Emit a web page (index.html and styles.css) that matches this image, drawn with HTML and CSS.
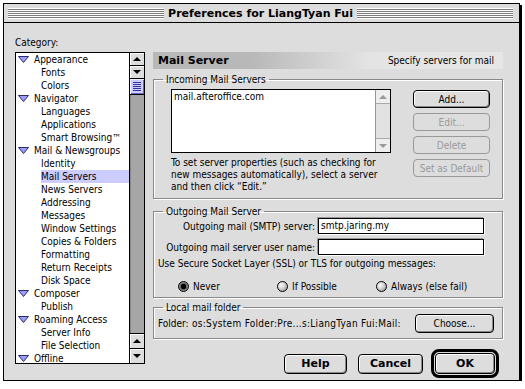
FILE: index.html
```html
<!DOCTYPE html>
<html lang="en">
    <head>
        <meta charset="UTF-8" />
        <meta name="viewport" content="width=device-width, initial-scale=1.0" />
        <title>Preferences for LiangTyan Fui</title>
        <link rel="stylesheet" href="styles.css">
    </head>

    <body>
        <div class="window">
            <div class="titlebar">
                <span class="stripes"></span>
                <span class="title">Preferences for LiangTyan Fui</span>
                <span class="stripes"></span>
            </div>

            <div class="content">
                <div class="sidebar">
                    <div class="cat-label">Category:</div>
                    <div class="tree">
                        <ul class="tree-items">
                            <li class="parent"><svg class="twisty" width="11" height="7" viewBox="0 0 11 7"><polygon points="0.5,0.5 10.5,0.5 5.5,6.5" fill="#9d9dff" stroke="#2a2a66"/></svg>Appearance</li>
                            <li class="child">Fonts</li>
                            <li class="child">Colors</li>
                            <li class="parent"><svg class="twisty" width="11" height="7" viewBox="0 0 11 7"><polygon points="0.5,0.5 10.5,0.5 5.5,6.5" fill="#9d9dff" stroke="#2a2a66"/></svg>Navigator</li>
                            <li class="child">Languages</li>
                            <li class="child">Applications</li>
                            <li class="child">Smart Browsing™</li>
                            <li class="parent"><svg class="twisty" width="11" height="7" viewBox="0 0 11 7"><polygon points="0.5,0.5 10.5,0.5 5.5,6.5" fill="#9d9dff" stroke="#2a2a66"/></svg>Mail &amp; Newsgroups</li>
                            <li class="child">Identity</li>
                            <li class="child selected">Mail Servers</li>
                            <li class="child">News Servers</li>
                            <li class="child">Addressing</li>
                            <li class="child">Messages</li>
                            <li class="child">Window Settings</li>
                            <li class="child">Copies &amp; Folders</li>
                            <li class="child">Formatting</li>
                            <li class="child">Return Receipts</li>
                            <li class="child">Disk Space</li>
                            <li class="parent"><svg class="twisty" width="11" height="7" viewBox="0 0 11 7"><polygon points="0.5,0.5 10.5,0.5 5.5,6.5" fill="#9d9dff" stroke="#2a2a66"/></svg>Composer</li>
                            <li class="child">Publish</li>
                            <li class="parent"><svg class="twisty" width="11" height="7" viewBox="0 0 11 7"><polygon points="0.5,0.5 10.5,0.5 5.5,6.5" fill="#9d9dff" stroke="#2a2a66"/></svg>Roaming Access</li>
                            <li class="child">Server Info</li>
                            <li class="child">File Selection</li>
                            <li class="parent"><svg class="twisty" width="11" height="7" viewBox="0 0 11 7"><polygon points="0.5,0.5 10.5,0.5 5.5,6.5" fill="#9d9dff" stroke="#2a2a66"/></svg>Offline</li>
                        </ul>
                        <div class="vscroll">
                            <div class="sb-btn top"><i class="arrow-up"></i></div>
                            <div class="sb-btn top"><i class="arrow-down"></i></div>
                            <div class="thumb"><span class="grip"></span></div>
                            <div class="track"></div>
                            <div class="sb-btn bottom"><i class="arrow-up"></i></div>
                            <div class="sb-btn bottom"><i class="arrow-down"></i></div>
                        </div>
                    </div>
                </div>

                <div class="panel">
                    <div class="panel-head">
                        <span class="head-title">Mail Server</span>
                        <span class="head-desc">Specify servers for mail</span>
                    </div>

                    <fieldset class="group incoming">
                        <legend>Incoming Mail Servers</legend>
                        <div class="incoming-body">
                            <div class="incoming-left">
                                <div class="server-list">
                                    <div class="server-items">mail.afteroffice.com</div>
                                    <div class="mini-scroll">
                                        <div class="mini-btn"><i class="arrow-up"></i></div>
                                        <div class="mini-track"></div>
                                        <div class="mini-btn lower"><i class="arrow-down"></i></div>
                                    </div>
                                </div>
                                <p class="hint">
                                    To set server properties (such as checking for<br />
                                    new messages automatically), select a server<br />
                                    and then click “Edit.”
                                </p>
                            </div>
                            <div class="btn-col">
                                <button class="btn">Add...</button>
                                <button class="btn" disabled>Edit...</button>
                                <button class="btn" disabled>Delete</button>
                                <button class="btn" disabled>Set as Default</button>
                            </div>
                        </div>
                    </fieldset>

                    <fieldset class="group outgoing">
                        <legend>Outgoing Mail Server</legend>
                        <div class="field-row">
                            <label class="field-label">Outgoing mail (SMTP) server:</label>
                            <div class="text-input">smtp.jaring.my</div>
                        </div>
                        <div class="field-row">
                            <label class="field-label">Outgoing mail server user name:</label>
                            <div class="text-input"></div>
                        </div>
                        <p class="ssl-note">Use Secure Socket Layer (SSL) or TLS for outgoing messages:</p>
                        <div class="radio-row">
                            <span class="radio-opt"><i class="radio on"></i>Never</span>
                            <span class="radio-opt"><i class="radio"></i>If Possible</span>
                            <span class="radio-opt"><i class="radio"></i>Always (else fail)</span>
                        </div>
                    </fieldset>

                    <fieldset class="group local">
                        <legend>Local mail folder</legend>
                        <div class="folder-row">
                            <span class="folder-label">Folder:</span>
                            <span class="folder-path">os:System Folder:Pre...s:LiangTyan Fui:Mail:</span>
                            <button class="btn choose">Choose...</button>
                        </div>
                    </fieldset>

                    <div class="dialog-btns">
                        <button class="btn big help">Help</button>
                        <button class="btn big cancel">Cancel</button>
                        <span class="default-ring"><button class="btn big ok">OK</button></span>
                    </div>
                </div>
            </div>
        </div>
    </body>
</html>
```

FILE: styles.css
```css
* {
    margin: 0;
    padding: 0;
    box-sizing: border-box;
}

body {
    background: #ffffff;
    font-family: "DejaVu Sans Condensed", "DejaVu Sans", sans-serif;
    font-size: 10px;
    color: #000000;
}

.window {
    margin: 3px 0 0 3px;
    width: 517px;
    height: 378px;
    border: 1px solid #000;
    background: #dddddd;
    box-shadow: 2px 2px 0 #000;
    display: flex;
    flex-direction: column;
}

/* title bar */
.titlebar {
    height: 19px;
    border-bottom: 1px solid #000;
    display: flex;
    align-items: center;
    padding: 0 6px 0 4px;
}

.stripes {
    flex: 1;
    height: 11px;
    background: repeating-linear-gradient(to bottom, #ffffff 0, #ffffff 1px, #7a7a7a 1px, #7a7a7a 2px);
}

.title {
    font-family: "DejaVu Sans", sans-serif;
    font-weight: bold;
    font-size: 11px;
    padding: 0 4px;
    white-space: nowrap;
}

.content {
    flex: 1;
    display: flex;
    padding-left: 11px;
}

/* category tree */
.sidebar {
    width: 130px;
}

.cat-label {
    margin-top: 14px;
    height: 12px;
    line-height: 12px;
}

.tree {
    margin-top: 3px;
    height: 312px;
    border: 1px solid #000;
    background: #fff;
    display: flex;
}

.tree-items {
    flex: 1;
    list-style: none;
    overflow: hidden;
}

.tree-items li {
    height: 13px;
    line-height: 13px;
    white-space: nowrap;
}

.parent {
    display: flex;
    align-items: center;
    padding-left: 2px;
}

.twisty {
    margin-right: 5px;
}

.child {
    margin-left: 25px;
}

.selected {
    background: #ccccff;
}

.vscroll {
    width: 15px;
    border-left: 1px solid #000;
    background: #a6a6a6;
    display: flex;
    flex-direction: column;
}

.sb-btn {
    background: #dddddd;
    display: flex;
    align-items: center;
    justify-content: center;
    box-shadow: inset 1px 1px 0 #fff;
}

.sb-btn.top {
    height: 13px;
    border-bottom: 1px solid #000;
}

.sb-btn.bottom {
    height: 15px;
    border-top: 1px solid #000;
}

.arrow-up {
    width: 0;
    height: 0;
    border-left: 4px solid transparent;
    border-right: 4px solid transparent;
    border-bottom: 4px solid #000;
}

.arrow-down {
    width: 0;
    height: 0;
    border-left: 4px solid transparent;
    border-right: 4px solid transparent;
    border-top: 4px solid #000;
}

.thumb {
    height: 16px;
    background: #ccccff;
    border-bottom: 1px solid #000;
    display: flex;
    align-items: center;
    justify-content: center;
    box-shadow: inset 1px 1px 0 #eeeeff, inset -1px -1px 0 #6666cc;
}

.grip {
    width: 8px;
    height: 9px;
    background: repeating-linear-gradient(to bottom, #333399 0, #333399 1px, #ccccff 1px, #ccccff 2px);
}

.track {
    flex: 1;
    box-shadow: inset 1px 0 0 #888;
}

/* right panel */
.panel {
    width: 350px;
    margin-left: 8px;
    display: flex;
    flex-direction: column;
}

.panel-head {
    margin-top: 29px;
    height: 17px;
    display: flex;
    justify-content: space-between;
    align-items: center;
    padding: 0 9px 0 5px;
    background: linear-gradient(to right, #b8b8b8 0%, #b8b8b8 28%, #e4e4e4 62%, #e6e6e6 100%);
}

.head-title {
    font-family: "DejaVu Sans", sans-serif;
    font-weight: bold;
    font-size: 11px;
}

fieldset.group {
    border: 1px solid #888;
    box-shadow: inset 1px 1px 0 #fff, 1px 1px 0 #fff;
    min-width: 0;
    padding: 0 0 5px 0;
}

legend {
    margin-left: 9px;
    padding: 0 3px;
    height: 11px;
    line-height: 11px;
}

.incoming {
    margin-top: 5px;
    padding-bottom: 6px;
}

.incoming-body {
    display: flex;
    padding: 4px 0 0 17px;
}

.server-list {
    width: 220px;
    height: 64px;
    border: 1px solid #000;
    background: #fff;
    display: flex;
}

.server-items {
    flex: 1;
    padding: 1px 2px;
    line-height: 12px;
}

.mini-scroll {
    width: 15px;
    border-left: 1px solid #999;
    background: #eeeeee;
    display: flex;
    flex-direction: column;
}

.mini-btn {
    height: 14px;
    border-bottom: 1px solid #aaa;
    display: flex;
    align-items: center;
    justify-content: center;
}

.mini-btn.lower {
    border-bottom: 0;
    border-top: 1px solid #aaa;
}

.mini-btn .arrow-up {
    border-bottom-color: #9a9a9a;
}

.mini-btn .arrow-down {
    border-top-color: #9a9a9a;
}

.mini-track {
    flex: 1;
    background: #e2e2e2;
}

.hint {
    margin-top: 4px;
    line-height: 12px;
}

.btn-col {
    margin-left: 22px;
    padding-top: 1px;
    display: flex;
    flex-direction: column;
    gap: 5px;
}

.btn {
    font: inherit;
    color: #000;
    height: 18px;
    border: 1px solid #000;
    border-radius: 4px;
    background: #dddddd;
    box-shadow: inset 1px 1px 0 #fff, inset -1px -1px 0 #888;
}

.btn-col .btn {
    width: 77px;
}

.btn:disabled {
    color: #999;
    border-color: #999;
    box-shadow: none;
}

/* outgoing */
.outgoing {
    margin-top: 7px;
    padding-bottom: 6px;
}

.field-row {
    display: flex;
    align-items: center;
    height: 16px;
    margin-top: 1px;
}

.field-row + .field-row {
    margin-top: 5px;
}

.field-label {
    width: 161px;
    margin-right: 3px;
    text-align: right;
    white-space: nowrap;
}

.text-input {
    width: 166px;
    height: 16px;
    border: 1px solid #000;
    background: #fff;
    padding: 0 2px;
    line-height: 14px;
    box-shadow: -1px -1px 0 #999, 1px 1px 0 #fff;
}

.ssl-note {
    margin: 3px 0 0 4px;
    line-height: 12px;
}

.radio-row {
    display: flex;
    align-items: center;
    height: 12px;
    margin-top: 10px;
    padding-left: 24px;
}

.radio-opt {
    width: 99px;
    display: flex;
    align-items: center;
    gap: 4px;
    white-space: nowrap;
}

.radio {
    width: 11px;
    height: 11px;
    border-radius: 50%;
    border: 1px solid #000;
    background: radial-gradient(circle at 35% 35%, #ffffff 0, #d0d0d0 45%, #8a8a8a 100%);
}

.radio.on {
    background: radial-gradient(circle, #000 0, #000 2.5px, #666 3px, #999 5px);
}

/* local folder */
.local {
    margin-top: 4px;
}

.folder-row {
    display: flex;
    align-items: center;
    padding: 1px 8px 0 4px;
}

.folder-label {
    width: 34px;
}

.folder-path {
    white-space: nowrap;
    letter-spacing: 0.3px;
}

.btn.choose {
    margin-left: auto;
    width: 79px;
    height: 19px;
}

/* dialog buttons */
.dialog-btns {
    display: flex;
    justify-content: flex-end;
    align-items: center;
    margin-top: 10px;
    padding-right: 4px;
}

.btn.big {
    font-family: "DejaVu Sans", sans-serif;
    font-weight: bold;
    font-size: 11px;
    height: 20px;
}

.help {
    width: 63px;
    margin-right: 11px;
}

.cancel {
    width: 65px;
    margin-right: 8px;
}

.default-ring {
    display: flex;
    border: 3px solid #000;
    border-radius: 8px;
    padding: 1px;
}

.btn.ok {
    width: 60px;
    height: 21px;
}
```
